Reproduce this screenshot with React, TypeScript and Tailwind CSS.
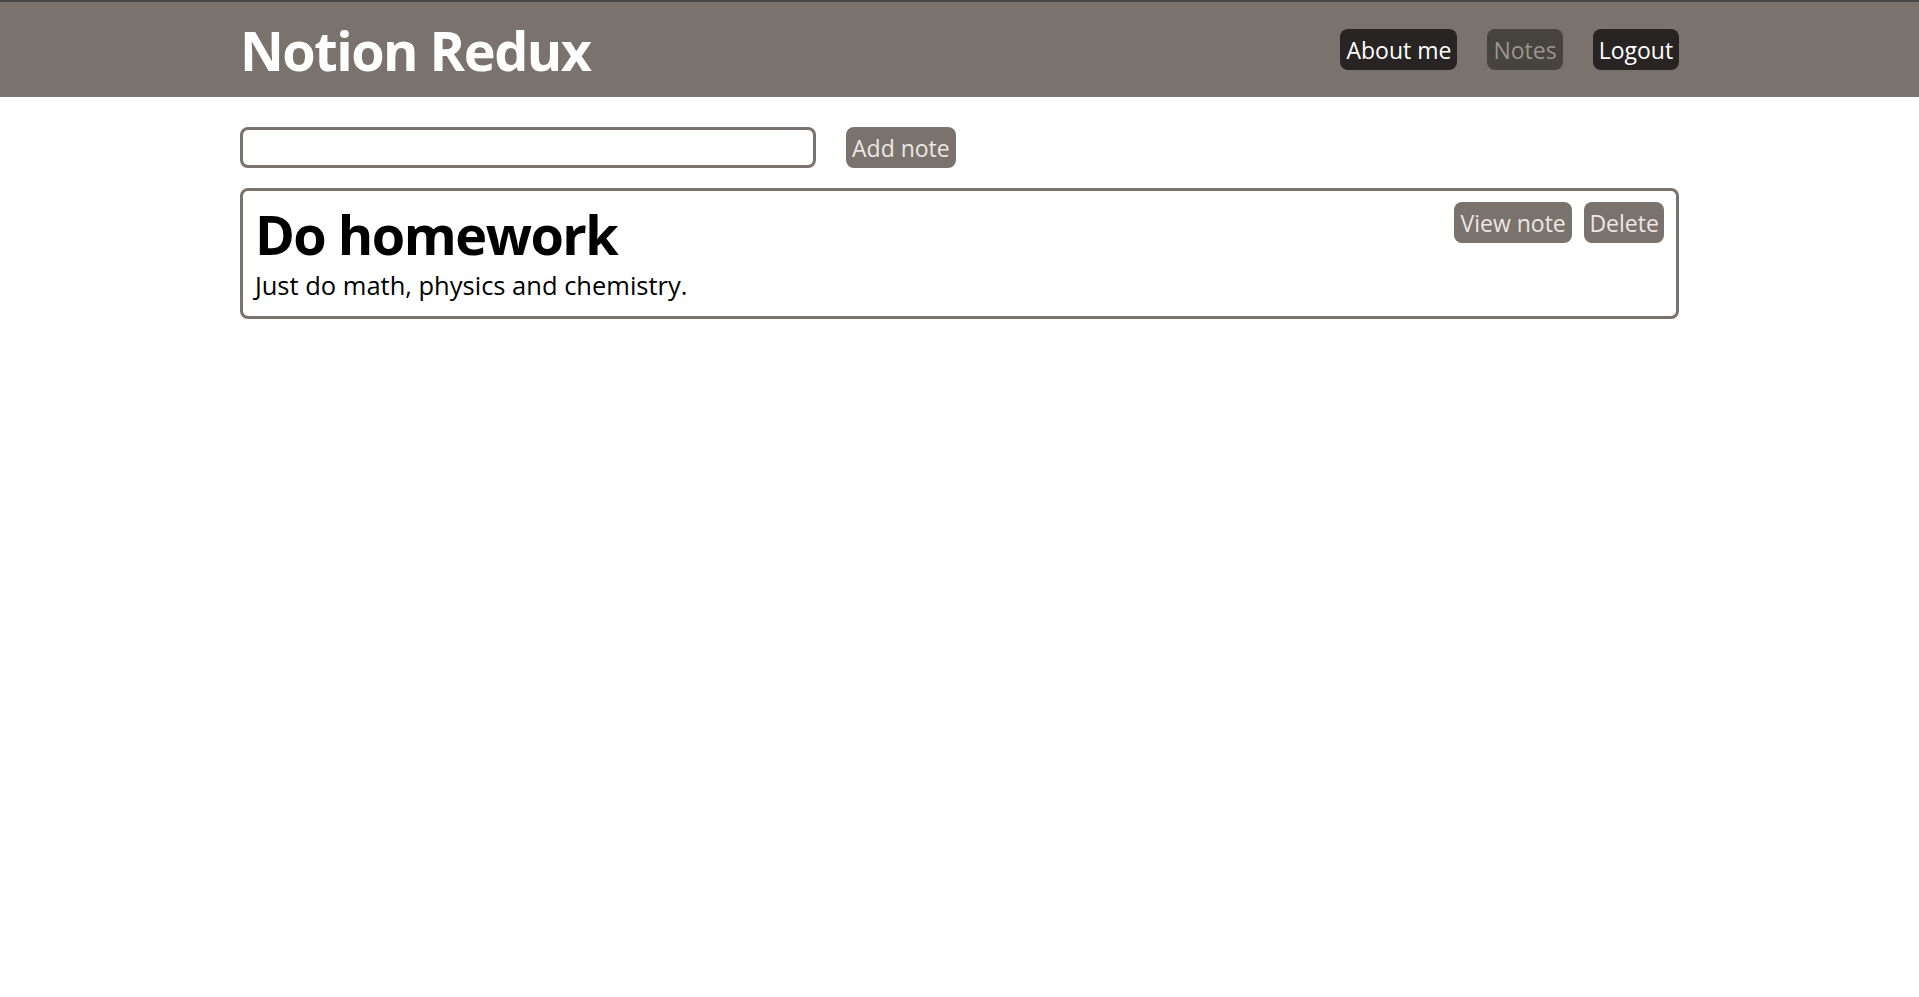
import React from "react";

const NavButton: React.FC<{ label: string; active?: boolean }> = ({ label, active }) => (
  <button
    className={
      active
        ? "h-[41px] px-[6px] pt-[2px] rounded-[8px] bg-[#47433f] text-[#9a9590] text-[23px] leading-none"
        : "h-[41px] px-[6px] pt-[2px] rounded-[8px] bg-[#282423] text-white text-[23px] leading-none"
    }
  >
    {label}
  </button>
);

const App: React.FC = () => {
  return (
    <div className="min-h-screen bg-white font-['Open_Sans',sans-serif]">
      {/* header */}
      <header className="h-[97px] bg-[#7a726c] border-t-2 border-[#4a4847]">
        <div className="w-[75%] mx-auto h-full flex items-center justify-between">
          <h1 className="text-[54px] font-bold text-white leading-none tracking-[-1.5px]">
            Notion Redux
          </h1>
          <nav className="flex items-center gap-[30px] -mt-[1px]">
            <NavButton label="About me" />
            <NavButton label="Notes" active />
            <NavButton label="Logout" />
          </nav>
        </div>
      </header>

      <main className="w-[75%] mx-auto pt-[30px]">
        {/* new note */}
        <div className="flex items-center gap-[30px]">
          <input
            type="text"
            className="w-[576px] h-[41px] border-[3px] border-[#7a726c] rounded-[8px] outline-none px-2 text-[20px]"
          />
          <button className="h-[41px] w-[110px] pt-[2px] rounded-[8px] bg-[#7a726c] text-[#ebe7e3] text-[23px] leading-none">
            Add note
          </button>
        </div>

        {/* notes */}
        <div className="mt-[20px] h-[131px] border-[3px] border-[#7a726c] rounded-[8px] px-[12px] pt-[11px] flex justify-between">
          <div className="pt-[5px]">
            <h2 className="text-[54px] font-bold text-black leading-none tracking-[-1.5px]">Do homework</h2>
            <p className="text-[25.5px] text-black leading-none mt-[12px]">
              Just do math, physics and chemistry.
            </p>
          </div>
          <div className="flex gap-[12px] items-start">
            <button className="h-[41px] w-[118px] pt-[2px] rounded-[8px] bg-[#7a726c] text-[#ebe7e3] text-[23px] leading-none">
              View note
            </button>
            <button className="h-[41px] w-[80px] pt-[2px] rounded-[8px] bg-[#7a726c] text-[#ebe7e3] text-[23px] leading-none">
              Delete
            </button>
          </div>
        </div>
      </main>
    </div>
  );
};

export default App;
